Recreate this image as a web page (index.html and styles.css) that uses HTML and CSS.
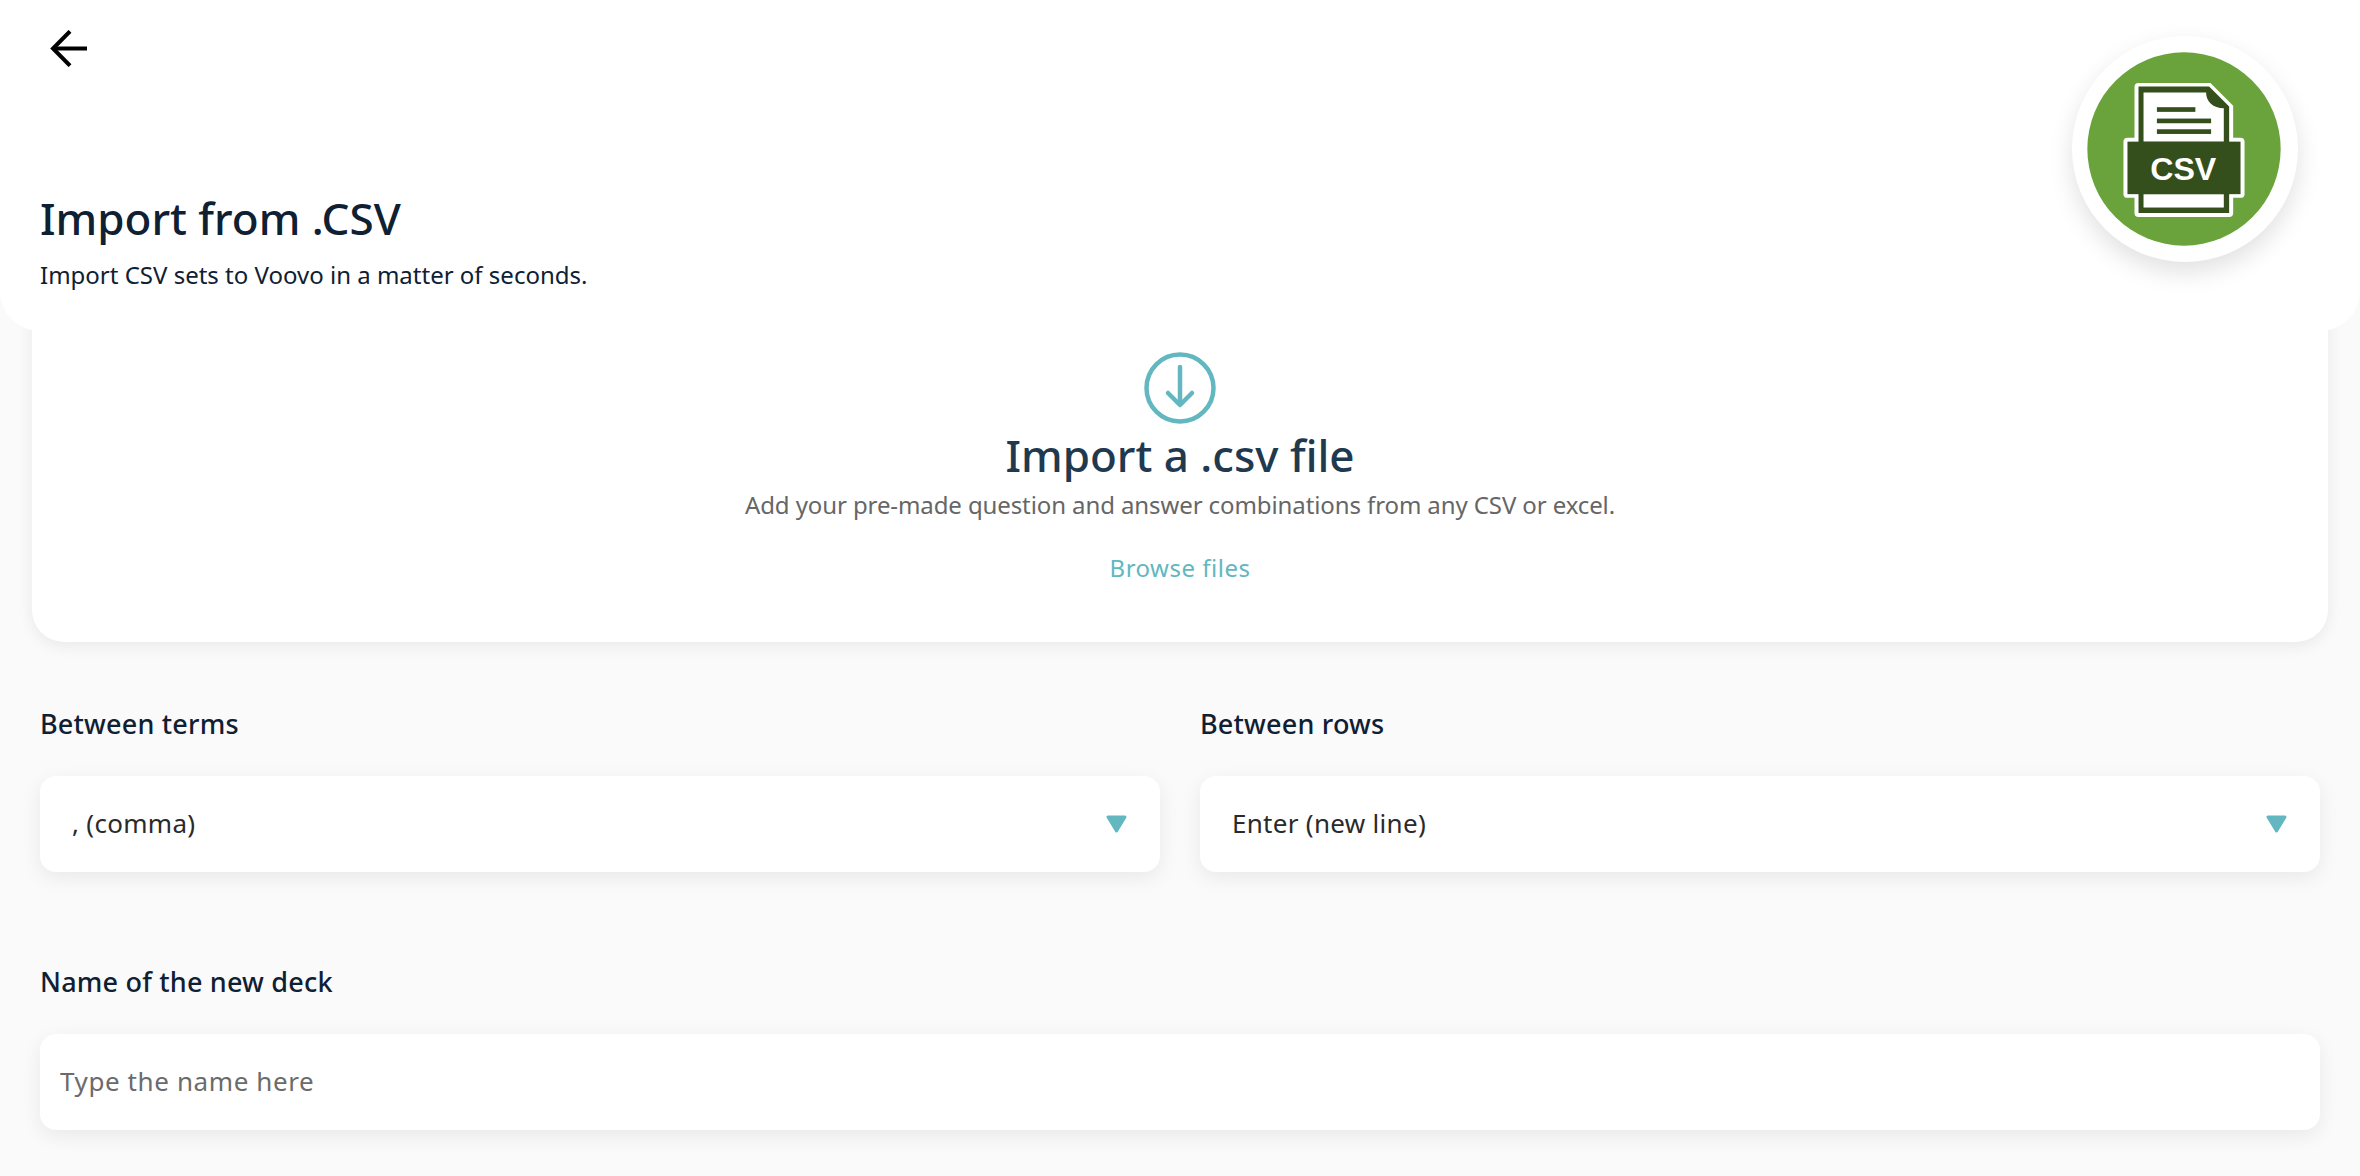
FILE: index.html
```html
<!DOCTYPE html>
<html lang="en">
<head>
<meta charset="utf-8">
<title>Import from .CSV</title>
<link rel="stylesheet" href="styles.css">
</head>
<body>
<div class="page">
  <header class="header">
    <button class="back" aria-label="Back">
      <svg width="37" height="37" viewBox="0 0 37 37" fill="none" stroke="#000" stroke-width="4" stroke-linejoin="miter"><path d="M37 18.500H3"/><path d="M20 1.300 3 18.500 20 35.700"/></svg>
    </button>
    <h1 class="title">Import from .CSV</h1>
    <p class="subtitle">Import CSV sets to Voovo in a matter of seconds.</p>
    <div class="badge">
      <svg class="badge-icon" viewBox="142 97 578 580">
        <circle cx="431" cy="387" r="289" fill="#6aa33b"/>
        <path d="M295 190H510L578 258V353H600Q612 353 612 365V522Q612 533 600 533H578V578Q578 590 566 590H295Q283 590 283 578V533H262Q250 533 250 522V365Q250 353 262 353H283V202Q283 190 295 190Z" fill="#fff"/>
        <path d="M295 200H506L566 260V578H295Z" fill="#344f1b"/>
        <path d="M310 218H497C497 245 518 265 550 265V365H310Z" fill="#fff"/>
        <rect x="310" y="522" width="240" height="40" fill="#fff"/>
        <rect x="262" y="365" width="338" height="157" fill="#344f1b"/>
        <rect x="350" y="262" width="115" height="14" fill="#344f1b"/>
        <rect x="350" y="296" width="162" height="14" fill="#344f1b"/>
        <rect x="350" y="328" width="162" height="14" fill="#344f1b"/>
        <text x="330" y="480" class="badge-text">CSV</text>
      </svg>
    </div>
  </header>

  <section class="drop">
    <svg class="drop-icon" width="72" height="72" viewBox="0 0 72 72" fill="none" stroke="#62b7c0" stroke-width="4.500" stroke-linecap="round" stroke-linejoin="round"><circle cx="36" cy="36" r="33.500"/><path d="M36 15V52"/><path d="M24 41 36 53 48 41"/></svg>
    <h2 class="drop-title">Import a .csv file</h2>
    <p class="drop-text">Add your pre-made question and answer combinations from any CSV or excel.</p>
    <a class="browse" href="#">Browse files</a>
  </section>

  <main class="form">
    <div class="row">
      <div class="field">
        <label class="label">Between terms</label>
        <div class="select">
          <span class="select-value">, (comma)</span>
          <svg class="caret" width="21" height="18" viewBox="0 0 21 18"><path d="M2 2H19L10.500 16Z" fill="#62b7c0" stroke="#62b7c0" stroke-width="3" stroke-linejoin="round"/></svg>
        </div>
      </div>
      <div class="field">
        <label class="label">Between rows</label>
        <div class="select">
          <span class="select-value">Enter (new line)</span>
          <svg class="caret" width="21" height="18" viewBox="0 0 21 18"><path d="M2 2H19L10.500 16Z" fill="#62b7c0" stroke="#62b7c0" stroke-width="3" stroke-linejoin="round"/></svg>
        </div>
      </div>
    </div>
    <div class="field">
      <label class="label" for="deck">Name of the new deck</label>
      <input id="deck" class="input" type="text" placeholder="Type the name here">
    </div>
  </main>
</div>
</body>
</html>
```

FILE: styles.css
```css
* { box-sizing: border-box; }
html, body { margin: 0; height: 100%; }
body {
  background: #fafafa;
  font-family: "Noto Sans", "Open Sans", sans-serif;
  color: #0f2033;
  overflow: hidden;
}
.page { height: 1176px; overflow: hidden; }

.header {
  position: relative;
  z-index: 2;
  height: 331px;
  background: #fff;
  border-radius: 0 0 40px 40px;
  padding: 30px 40px 0;
}
.back {
  display: block;
  margin: 0 0 0 10px;
  padding: 0;
  border: 0;
  background: none;
  height: 37px;
}
.back svg { display: block; }
.title {
  margin: 121px 0 0;
  font-size: 44px;
  line-height: 60px;
  font-weight: 500;
  color: #0f2033;
}
.subtitle {
  margin: 11px 0 0;
  font-size: 24px;
  line-height: 32px;
  color: #0f2033;
}
.badge {
  position: absolute;
  left: 2072px;
  top: 36px;
  width: 226px;
  height: 226px;
  padding-right: 3px;
  border-radius: 50%;
  background: #fff;
  display: flex;
  align-items: center;
  justify-content: center;
  box-shadow: 0 10px 24px rgba(0,0,0,.12);
}
.badge-icon { display: block; width: 194px; height: 194px; flex: none; }
.badge-text {
  font-family: "Liberation Sans", Arial, sans-serif;
  font-weight: 700;
  font-size: 96px;
  fill: #fff;
}

.drop {
  position: relative;
  z-index: 1;
  margin: -61px 32px 0;
  height: 372px;
  padding-top: 82px;
  background: #fff;
  border-radius: 0 0 32px 32px;
  box-shadow: 0 4px 16px rgba(0,0,0,.07);
  display: flex;
  flex-direction: column;
  align-items: center;
}
.drop-icon { display: block; flex: none; }
.drop-title {
  margin: 1px 0 0;
  font-size: 44px;
  line-height: 60px;
  font-weight: 500;
  color: #1f3a4f;
}
.drop-text {
  margin: 3px 0 0;
  font-size: 24px;
  line-height: 34px;
  letter-spacing: -.1px;
  color: #666;
}
.browse {
  margin-top: 29px;
  font-size: 24px;
  line-height: 34px;
  letter-spacing: .5px;
  color: #62b7c0;
  text-decoration: none;
}

.form {
  padding: 0 40px;
  margin-top: 64px;
  display: flex;
  flex-direction: column;
  gap: 92px;
}
.row { display: grid; grid-template-columns: 1fr 1fr; gap: 40px; }
.label {
  display: block;
  font-size: 27px;
  line-height: 36px;
  letter-spacing: .2px;
  font-weight: 500;
  color: #0f2033;
  margin-bottom: 34px;
}
.select, .input {
  height: 96px;
  width: 100%;
  background: #fff;
  border-radius: 16px;
  box-shadow: 0 6px 20px rgba(0,0,0,.07);
}
.select {
  display: flex;
  align-items: center;
  justify-content: space-between;
  padding: 0 33px 0 32px;
  font-size: 26px;
  color: #2a2a2a;
}
.select-value { letter-spacing: .3px; margin-top: -3px; }
.caret { display: block; }
.input {
  display: block;
  border: 0;
  outline: 0;
  padding: 0 20px 2px;
  font-family: inherit;
  font-size: 26px;
  letter-spacing: .6px;
  color: #222;
}
.input::placeholder { color: #6b6b6b; opacity: 1; }
```
